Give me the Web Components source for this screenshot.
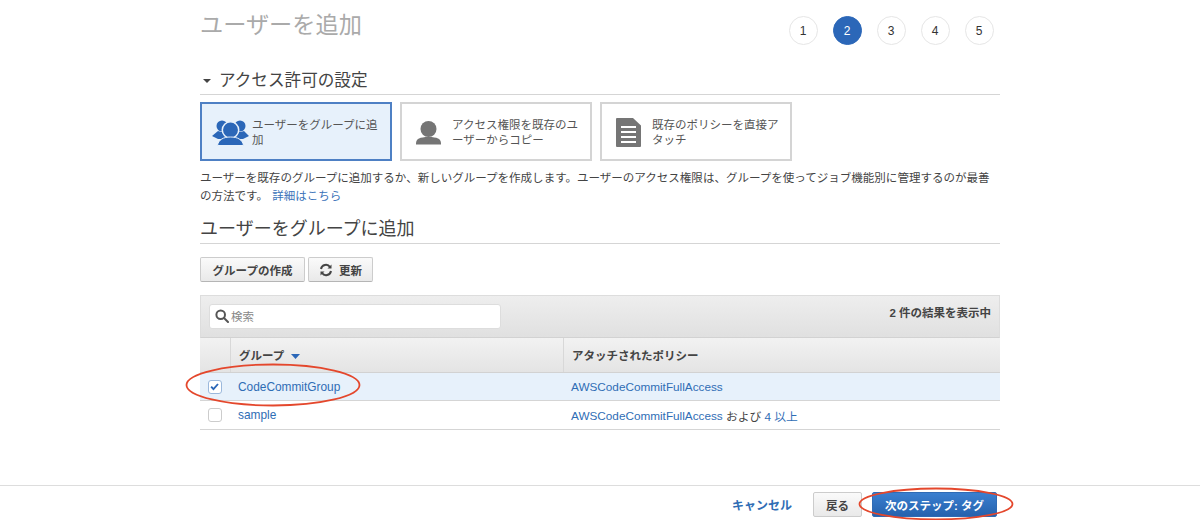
<!DOCTYPE html>
<html lang="ja"><head><meta charset="utf-8">
<style>
html,body{margin:0;padding:0;background:#fff;height:520px;overflow:hidden}
body{font-family:"Liberation Sans","Noto Sans CJK JP",sans-serif;color:#444;font-size:12px}
</style></head><body>
<wizard-page>
  <page-head slot="head" title-text="ユーザーを追加" current="2"></page-head>
  <section-title collapsible>アクセス許可の設定</section-title>
  <div style="height:7px"></div>
  <option-cards></option-cards>
  <help-text></help-text>
  <div style="height:15px"></div>
  <section-title>ユーザーをグループに追加</section-title>
  <tool-bar></tool-bar>
  <group-table></group-table>
</wizard-page>
<wizard-footer></wizard-footer>
<script>
function def(name, css, html){
  customElements.define(name, class extends HTMLElement{
    constructor(){super();this.attachShadow({mode:'open'})}
    connectedCallback(){
      this.shadowRoot.innerHTML='<style>'+css+'</style>'+(typeof html==='function'?html(this):html);
    }
  });
}
def('wizard-page',':host{display:block;width:800px;margin:0 auto 0 200px}','<slot name="head"></slot><slot></slot>');
def('page-head',`:host{display:flex;justify-content:space-between;align-items:flex-start;height:71px}
h1{margin:12px 0 0;font-size:23.200px;line-height:27px;font-weight:400;color:#aaa}
ol{list-style:none;margin:16px 6.500px 0 0;padding:0;display:flex;gap:15px}
li{box-sizing:border-box;width:29px;height:29px;border-radius:50%;border:1px solid #e6e6e6;display:flex;align-items:center;justify-content:center;font-size:12px;color:#333}
li.on{background:#2b67b8;border-color:#2b67b8;color:#fff}`,
el=>{const c=+el.getAttribute('current');return `<h1>${el.getAttribute('title-text')}</h1><ol>${[1,2,3,4,5].map(n=>`<li class="${n===c?'on':''}">${n}</li>`).join('')}</ol>`});
def('section-title',`:host{display:flex;align-items:center;height:23px;border-bottom:1px solid #d5d5d5;color:#444;line-height:23px}
span{font-size:16.600px;padding-bottom:4px}
i{width:0;height:0;border:4px solid transparent;border-top:4.500px solid #444;border-bottom:0;margin:0 8px 3px 3px}`,
el=>(el.hasAttribute('collapsible')?'<i></i><span><slot></slot></span>':'<span style="font-size:18px"><slot></slot></span>'));
def('option-cards',`:host{display:flex;gap:8px}
div{box-sizing:border-box;width:192px;height:59px;border:2px solid #d4d4d4;display:flex;align-items:center;color:#555;font-size:11.500px;line-height:15px}
div.on{background:#e7f1fb;border-color:#4e80c4}
svg{flex:none;margin-left:10px;width:40px;height:30px}
span{width:136px;margin-top:2px}`,
`<div class="on"><svg viewBox="0 0 40 30" fill="#2b67b8"><circle cx="10" cy="9" r="5.500"/><circle cx="28" cy="9" r="5.500"/><path d="M0 19l6-5 3 1h20l3-1 5 5-6 3H6z"/><circle cx="18.500" cy="13" r="8.200" stroke="#e7f1fb" stroke-width="1.500"/><path d="M5.500 28.500c1-6 6-8.500 13-8.500s12 2.500 13 8.500z" stroke="#e7f1fb" stroke-width="1"/></svg><span>ユーザーをグループに追加</span></div>
<div><svg viewBox="0 0 40 30" fill="#757575"><circle cx="16.500" cy="12" r="8"/><path d="M4 27.500c0-2.500 0-4.500 3-6 2-1 5-1.500 9.500-1.500s7.500.5 9.500 1.500c3 1.500 3 3.500 3 6z"/></svg><span>アクセス権限を既存のユーザーからコピー</span></div>
<div><svg viewBox="0 0 40 30" fill="#757575"><path d="M5 1h16l8 7.500V29a1 1 0 0 1-1 1H5a1 1 0 0 1-1-1V2a1 1 0 0 1 1-1z"/><path d="M9 9h15v2H9zM9 14h15v2H9zM9 19h15v2H9zM9 24h15v2H9z" fill="#fff"/></svg><span>既存のポリシーを直接アタッチ</span></div>`);
def('help-text',`:host{display:block;margin-top:8px;line-height:18px;font-size:11.520px;color:#444}
div{white-space:nowrap}a{color:#3b73b9;margin-left:1px}`,
`<div>ユーザーを既存のグループに追加するか、新しいグループを作成します。ユーザーのアクセス権限は、グループを使ってジョブ機能別に管理するのが最善</div><div><span>の方法です。</span> <a>詳細はこちら</a></div>`);
def('tool-bar',`:host{display:flex;gap:3px;margin-top:13px}
button{box-sizing:border-box;height:25px;padding:0;border:1px solid #ccc;border-bottom-color:#b5b5b5;border-radius:2px;background:linear-gradient(#fafafa,#e9e9e9);font:700 11.500px "Liberation Sans","Noto Sans CJK JP",sans-serif;color:#444;display:flex;align-items:center;justify-content:center;gap:6px}
svg{width:14px;height:14px}`,
`<button style="width:105px">グループの作成</button><button style="width:65px"><svg viewBox="0 0 14 14" fill="none" stroke="#444" stroke-width="2"><path d="M2 6a5 5 0 0 1 9-2"/><path d="M12 8a5 5 0 0 1-9 2"/><path d="M12.500 1.500v4h-4z" fill="#444" stroke="none"/><path d="M1.500 12.500v-4h4z" fill="#444" stroke="none"/></svg>更新</button>`);
def('group-table',`:host{display:block;margin-top:13px;font-size:12px}
.top{box-sizing:border-box;height:43px;background:linear-gradient(#eee,#e0e0e0);border:1px solid #ddd;border-bottom:1px solid #d2d2d2;display:flex;align-items:flex-start;justify-content:space-between;padding:8px 8px 0 8px}
.search{box-sizing:border-box;width:292px;height:25px;background:#fff;border:1px solid #ddd;border-radius:3px;display:flex;align-items:center;gap:2px;padding-left:5px;padding-bottom:1px;color:#888;font-size:11.500px}
.count{font-weight:700;color:#444;line-height:18px;font-size:11.500px}
.row{display:grid;grid-template-columns:30px 333px 1fr;align-items:stretch;box-sizing:border-box}
.row>*{display:flex;align-items:center;box-sizing:border-box}
.head{height:35px;background:linear-gradient(#f2f2f2,#e4e4e4);font-weight:700;color:#444;border-bottom:1px solid #d2d2d2;font-size:11.500px}
.head>*{border-left:1px solid #d8d8d8;padding-left:8px}
.head>*:first-child{border-left:0}
.head svg{margin-left:7px;margin-top:3px}
.body{height:28px;border-bottom:1px solid #d5d5d5}
.body.b2{height:29px}
.body.sel{background:#e7f1fb}
.body>*:nth-child(2){padding-left:8px;font-size:11.880px}.body>*:nth-child(3){padding-left:8px;font-size:11.760px}
a{color:#2f6db5}
.cb{width:14px;height:14px;box-sizing:border-box;margin-left:8px;border:1px solid #ccc;border-radius:3px;background:#fff;display:block}
.cb.on{border-color:#9bb8dc}
.gap{white-space:pre}`,
`<div class="top"><div class="search"><svg width="14" height="14" viewBox="0 0 14 14" fill="none" stroke="#555" stroke-width="2"><circle cx="5.700" cy="5.700" r="4.300"/><path d="M9 9l4 4" stroke-linecap="round"/></svg>検索</div><div class="count">2 件の結果を表示中</div></div>
<div class="row head"><div></div><div>グループ<svg width="9" height="5" viewBox="0 0 9 5"><path d="M0 0h9L4.500 5z" fill="#2b67b8"/></svg></div><div>アタッチされたポリシー</div></div>
<div class="row body sel"><div><svg class="cb on" viewBox="0 0 14 14"><path d="M2.500 6.500l2.700 3 5.300-6" fill="none" stroke="#2b67b8" stroke-width="2.200"/></svg></div><div><a>CodeCommitGroup</a></div><div><a>AWSCodeCommitFullAccess</a></div></div>
<div class="row body b2"><div><span class="cb"></span></div><div><a>sample</a></div><div><a>AWSCodeCommitFullAccess</a><span class="gap"> および </span><a>4 以上</a></div></div>
<svg style="position:absolute;left:184px;top:363px;overflow:visible" width="180" height="46" viewBox="0 0 180 46"><ellipse cx="89" cy="22" rx="86.500" ry="20.500" fill="none" stroke="#e4472c" stroke-width="1.800"/></svg>`);
def('wizard-footer',`:host{position:absolute;left:0;right:0;top:485px;height:35px;border-top:1px solid #ddd;display:flex;justify-content:flex-end;align-items:center;padding:0 203px 0 0;box-sizing:border-box;background:#fff;font:700 11.500px "Liberation Sans","Noto Sans CJK JP",sans-serif}
a{color:#2f6db5;margin-right:21px;font-size:12px}
button{box-sizing:border-box;height:25px;border-radius:2px;font:inherit;padding:0;margin-top:3px}
.b{width:49px;background:linear-gradient(#fafafa,#e9e9e9);border:1px solid #ccc;color:#444;margin-right:10px}
.n{width:125px;background:linear-gradient(#3a7fd0,#2662ad);border:1px solid #2f6bb5;color:#fff}`,
`<a style="margin-top:3px">キャンセル</a><button class="b">戻る</button><button class="n">次のステップ: タグ</button>
<svg style="position:absolute;left:858px;top:0;overflow:visible" width="156" height="34" viewBox="0 0 156 34"><ellipse cx="78" cy="18" rx="76.500" ry="15.500" fill="none" stroke="#e4472c" stroke-width="1.800"/></svg>`);
</script>
</body></html>
